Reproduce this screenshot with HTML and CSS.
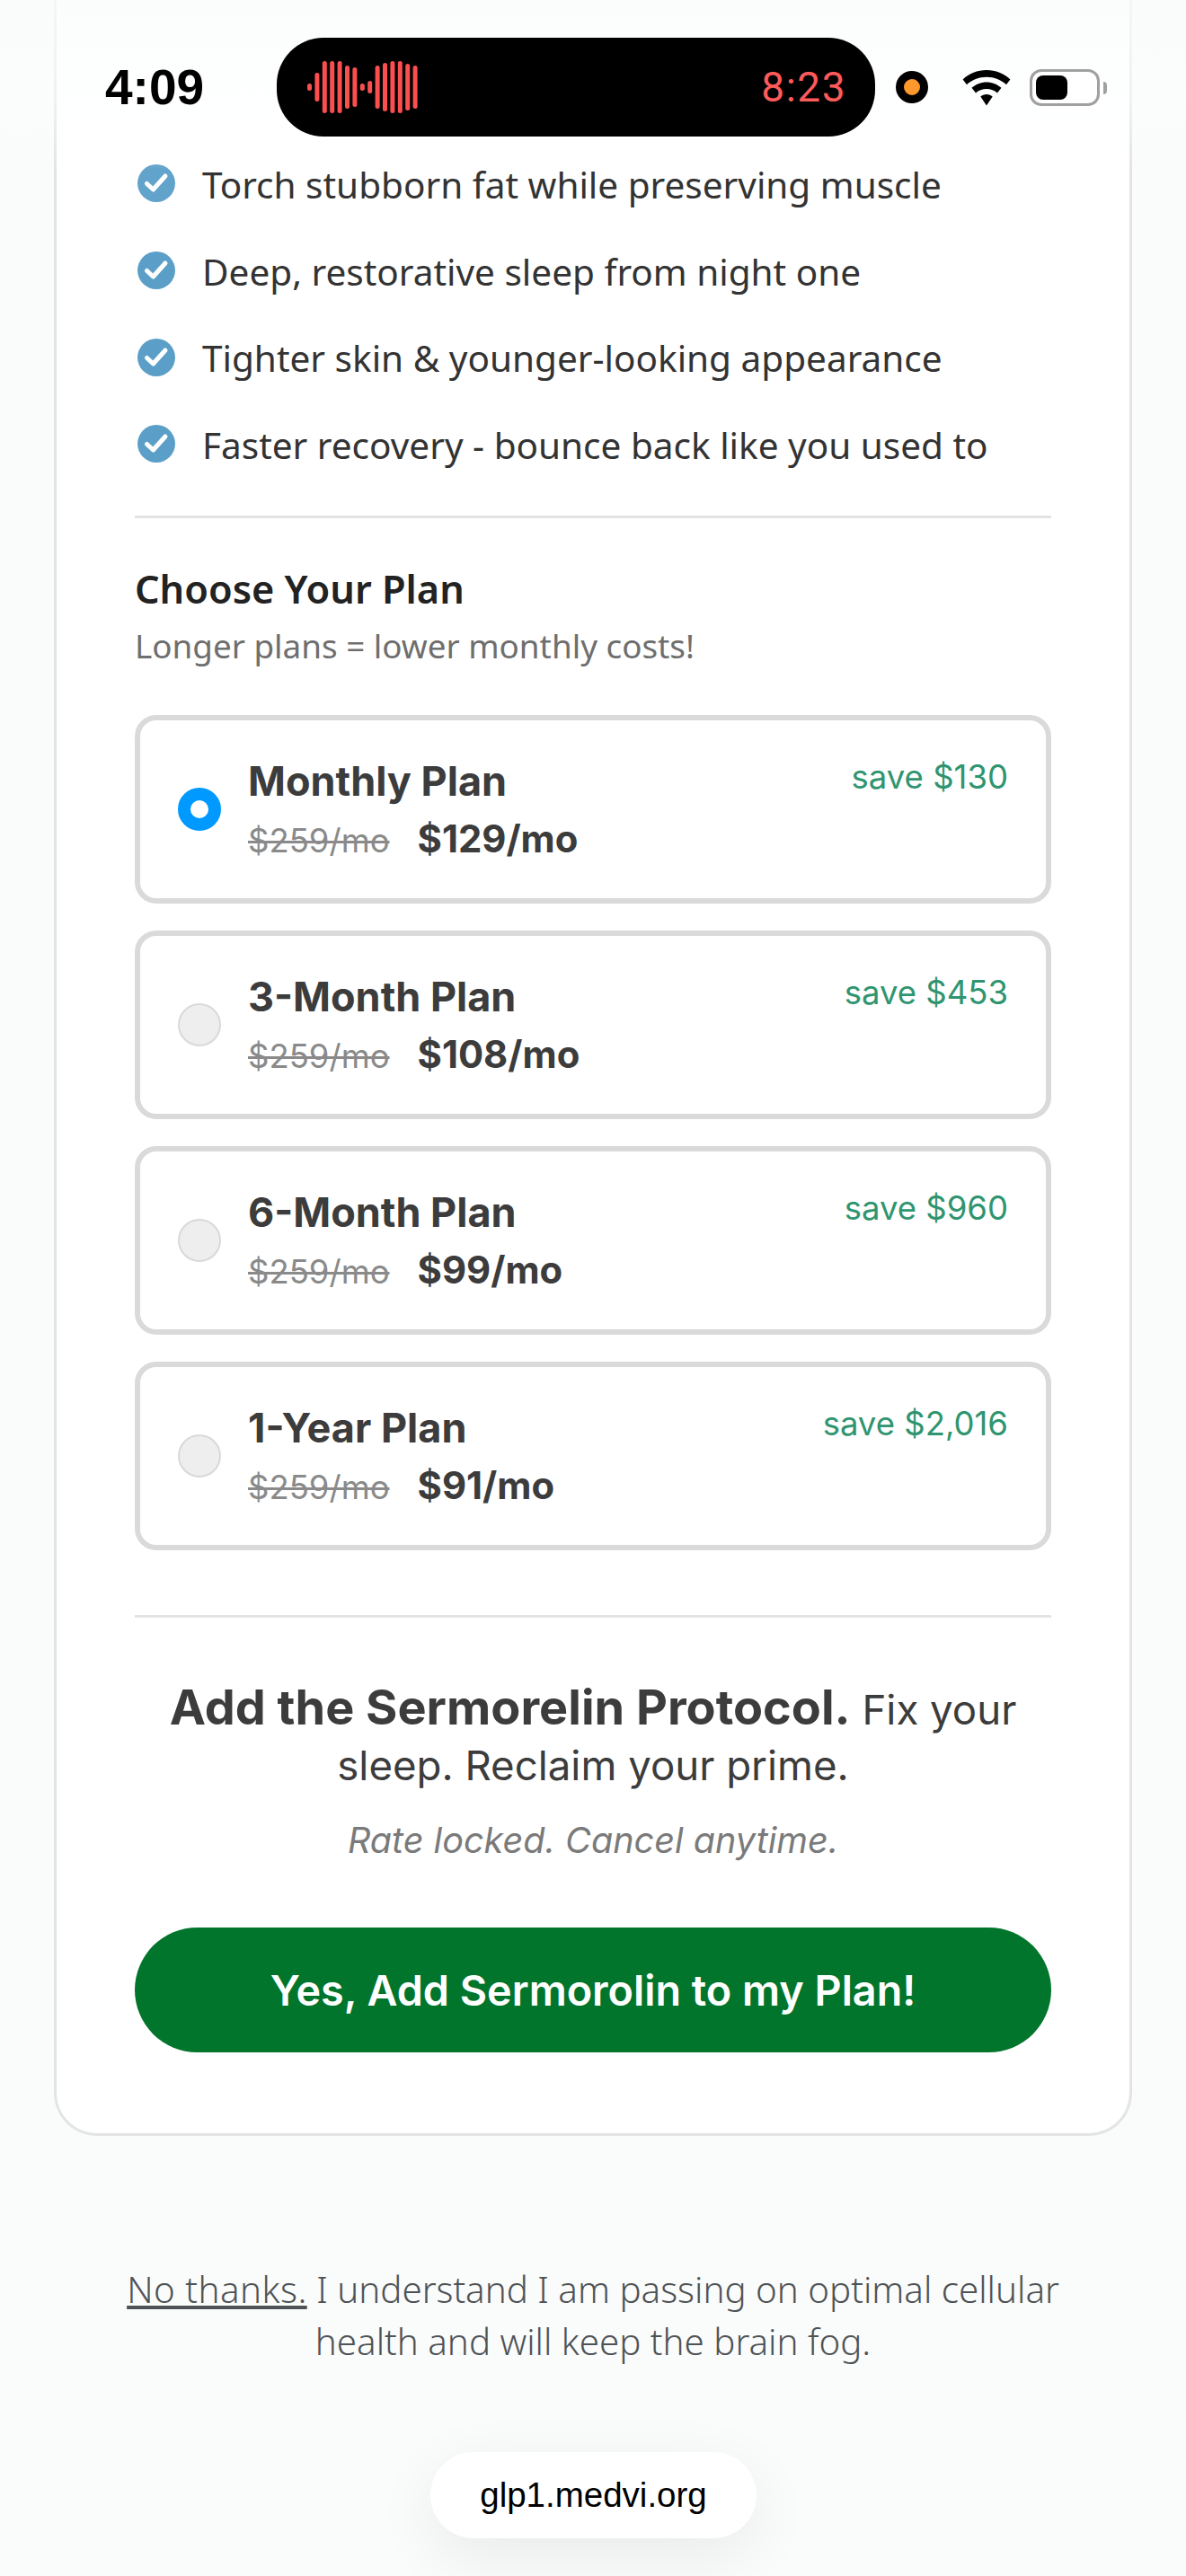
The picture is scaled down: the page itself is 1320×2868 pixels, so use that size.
FILE: index.html
```html
<!DOCTYPE html>
<html lang="en">
<head>
<meta charset="utf-8">
<title>Add the Sermorelin Protocol</title>
<link rel="stylesheet" href="styles.css">
</head>
<body>
<header class="status">
  <span class="clock">4:09</span>
  <div class="island">
    <svg class="wave" width="128" height="60" viewBox="0 0 128 60" fill="#fb4f4f">
      <rect x="0" y="26" width="5" height="8" rx="2.5"/><rect x="8.4" y="14" width="5" height="32" rx="2.5"/><rect x="16.8" y="1" width="5" height="58" rx="2.5"/><rect x="25.2" y="1" width="5" height="58" rx="2.5"/><rect x="33.6" y="1" width="5" height="58" rx="2.5"/><rect x="42" y="6" width="5" height="48" rx="2.5"/><rect x="50.4" y="8" width="5" height="44" rx="2.5"/><rect x="58.8" y="26" width="5" height="8" rx="2.5"/><rect x="67.2" y="23" width="5" height="14" rx="2.5"/><rect x="75.6" y="6" width="5" height="48" rx="2.5"/><rect x="84" y="3" width="5" height="54" rx="2.5"/><rect x="92.4" y="1" width="5" height="58" rx="2.5"/><rect x="100.8" y="1" width="5" height="58" rx="2.5"/><rect x="109.2" y="4" width="5" height="52" rx="2.5"/><rect x="117.6" y="6" width="5" height="48" rx="2.5"/>
    </svg>
    <span class="timer">8:23</span>
  </div>
  <span class="dot"></span>
  <svg class="wifi" width="54" height="40" viewBox="0 0 54 40" fill="#000">
    <path d="M27 0C16.8 0 7.6 4 .6 10.400L5 16.200C10.800 11 18.500 7.800 27 7.800S43.200 11 49 16.200L53.400 10.400C46.400 4 37.200 0 27 0Z"/>
    <path d="M27 13.400C20.700 13.400 15 15.800 10.500 19.700L15 25.600C18.200 22.800 22.400 21.100 27 21.100S35.800 22.800 39 25.600L43.500 19.700C39 15.800 33.300 13.400 27 13.400Z"/>
    <path d="M27 27C24.400 27 22.100 28 20.300 29.500L27 39.500L33.700 29.500C31.900 28 29.600 27 27 27Z"/>
  </svg>
  <div class="battery"><span class="battery-fill"></span></div>
  <span class="battery-nub"></span>
</header>

<main class="card">
  <ul class="benefits">
    <li class="benefit"><svg class="check" width="42" height="42" viewBox="0 0 42 42"><circle cx="21" cy="21" r="21" fill="#62a3cb"/><path d="M10.500 21.500L17.500 28L31 13" fill="none" stroke="#fff" stroke-width="5" stroke-linecap="round" stroke-linejoin="round"/></svg><span>Torch stubborn fat while preserving muscle</span></li>
    <li class="benefit"><svg class="check" width="42" height="42" viewBox="0 0 42 42"><circle cx="21" cy="21" r="21" fill="#5b9fc8"/><path d="M10.500 21.500L17.500 28L31 13" fill="none" stroke="#fff" stroke-width="5" stroke-linecap="round" stroke-linejoin="round"/></svg><span>Deep, restorative sleep from night one</span></li>
    <li class="benefit"><svg class="check" width="42" height="42" viewBox="0 0 42 42"><circle cx="21" cy="21" r="21" fill="#5b9fc8"/><path d="M10.500 21.500L17.500 28L31 13" fill="none" stroke="#fff" stroke-width="5" stroke-linecap="round" stroke-linejoin="round"/></svg><span>Tighter skin &amp; younger-looking appearance</span></li>
    <li class="benefit"><svg class="check" width="42" height="42" viewBox="0 0 42 42"><circle cx="21" cy="21" r="21" fill="#5b9fc8"/><path d="M10.500 21.500L17.500 28L31 13" fill="none" stroke="#fff" stroke-width="5" stroke-linecap="round" stroke-linejoin="round"/></svg><span>Faster recovery - bounce back like you used to</span></li>
  </ul>
  <hr class="rule">
  <h2 class="choose">Choose Your Plan</h2>
  <p class="choose-sub">Longer plans = lower monthly costs!</p>
  <div class="plans">
    <div class="plan">
      <span class="radio radio-on"></span>
      <div class="plan-body"><div class="plan-name">Monthly Plan</div><div class="plan-prices"><s class="old">$259/mo</s><b class="new">$129/mo</b></div></div>
      <span class="save">save $130</span>
    </div>
    <div class="plan">
      <span class="radio"></span>
      <div class="plan-body"><div class="plan-name">3-Month Plan</div><div class="plan-prices"><s class="old">$259/mo</s><b class="new">$108/mo</b></div></div>
      <span class="save">save $453</span>
    </div>
    <div class="plan">
      <span class="radio"></span>
      <div class="plan-body"><div class="plan-name">6-Month Plan</div><div class="plan-prices"><s class="old">$259/mo</s><b class="new">$99/mo</b></div></div>
      <span class="save">save $960</span>
    </div>
    <div class="plan">
      <span class="radio"></span>
      <div class="plan-body"><div class="plan-name">1-Year Plan</div><div class="plan-prices"><s class="old">$259/mo</s><b class="new">$91/mo</b></div></div>
      <span class="save">save $2,016</span>
    </div>
  </div>
  <hr class="rule rule-low">
  <p class="pitch"><strong>Add the Sermorelin Protocol.</strong> Fix your sleep. Reclaim your prime.</p>
  <p class="locked">Rate locked. Cancel anytime.</p>
  <button class="cta">Yes, Add Sermorolin to my Plan!</button>
</main>

<p class="decline"><a class="decline-link">No thanks.</a> I understand I am passing on optimal cellular health and will keep the brain fog.</p>
<div class="url-wrap"><div class="url">glp1.medvi.org</div></div>
</body>
</html>
```
FILE: styles.css
```css
* { box-sizing: border-box; }
html, body { margin: 0; height: 2868px; overflow: hidden; }
body { background: #fafbfb; font-family: "Noto Sans", sans-serif; position: relative; }

.status { position: absolute; top: 0; left: 0; right: 0; height: 194px; padding: 42px 88px 0 116px; display: flex; align-items: flex-start; background: linear-gradient(rgba(250,252,252,.75) 0, rgba(253,254,254,.5) 110px, rgba(255,255,255,0) 190px); }
.clock { font: 700 55px/110px "Liberation Sans", sans-serif; color: #000; width: 192px; padding-left: 1px; }
.island { width: 666px; height: 110px; border-radius: 52px; background: #000; display: flex; align-items: center; justify-content: space-between; padding: 0 32px 0 34px; }
.wave { display: block; }
.timer { font: 400 46px/1 Roboto, sans-serif; letter-spacing: 1.500px; color: #fd5a5a; }
.dot { width: 36px; height: 36px; margin: 37px 0 0 23px; border-radius: 50%; background: #ff992b; border: 9px solid #000; }
.wifi { margin: 36px 0 0 38px; }
.battery { width: 78px; height: 41px; margin: 35px 0 0 21px; border: 3px solid #a0a0a0; border-radius: 13px; padding: 4px; background: #fff; }
.battery-fill { display: block; width: 35px; height: 100%; border-radius: 8px; background: #000; }
.battery-nub { width: 4px; height: 14px; margin: 49px 0 0 4px; border-radius: 0 7px 7px 0; background: #a0a0a0; }

.card { margin: 0 60px; height: 2378px; padding: 157px 87px 0; background: #fff; border: 3px solid #e3e4e4; border-top: 0; border-radius: 0 0 48px 48px; }
.benefits { list-style: none; margin: 0; padding: 0; }
.benefit { height: 96.7px; display: flex; align-items: center; gap: 30px; font-size: 40.500px; color: #333; padding-left: 3px; }
.check { flex: none; margin-top: -2px; }
.rule { height: 3px; margin: 30px 0 0; border: 0; background: #e3e3e3; }
.rule-low { margin-top: 72px; }
.choose { margin: 49px 0 0; font: 600 43.300px/60px "Noto Sans", sans-serif; color: #222; }
.choose-sub { margin: 6px 0 0; font-size: 36.800px; line-height: 54px; color: #6e6e6e; }
.plans { margin-top: 50px; display: flex; flex-direction: column; gap: 30px; }
.plan { height: 210px; border: 6px solid #dadada; border-radius: 24px; background: #fff; display: flex; align-items: center; padding: 0 42px 0 42px; position: relative; }
.radio { flex: none; width: 48px; height: 48px; border-radius: 50%; background: #eee; border: 2px solid #d9d9d9; margin-right: 30px; }
.radio-on { background: #fff; border: 14px solid #0099ff; }
.plan-body { flex: 1; font-family: Inter, sans-serif; color: #3c3c3c; padding-bottom: 3px; }
.plan-name { font-size: 45px; font-weight: 700; line-height: 60px; }
.plan-prices { display: flex; align-items: baseline; gap: 31px; margin-top: 9px; }
.old { font-size: 36.500px; color: #8a8a8a; }
.new { font-size: 41.800px; font-weight: 700; }
.save { position: absolute; top: 38px; right: 42px; font: 400 36.500px/50px Inter, sans-serif; color: #2f9570; }
.pitch { margin: 69px 0 0; text-align: center; font: 400 45.600px/62px Inter, sans-serif; color: #3c3c3c; }
.pitch strong { font-size: 54px; font-weight: 700; }
.locked { margin: 27px 0 0; text-align: center; font: italic 400 39.600px/50px Inter, sans-serif; color: #7a7a7a; }
.cta { display: block; width: 100%; height: 139px; margin-top: 72px; padding: 2px 0 0; border: 0; border-radius: 70px; background: #01752b; color: #fff; font: 600 46.700px/1 Inter, sans-serif; }

.decline { margin: 142px auto 0; width: 1060px; text-align: center; font-size: 40.300px; line-height: 58px; font-weight: 300; color: #4f5356; }
.decline-link { text-decoration: underline; letter-spacing: .5px; }
.url-wrap { display: flex; justify-content: center; margin-top: 94px; padding-left: 1px; }
.url { width: 363px; height: 96px; border-radius: 48px; background: #fff; box-shadow: 0 20px 70px rgba(0,0,0,.07); text-align: center; font: 400 38.500px/96px "Liberation Sans", sans-serif; color: #000; }
```
